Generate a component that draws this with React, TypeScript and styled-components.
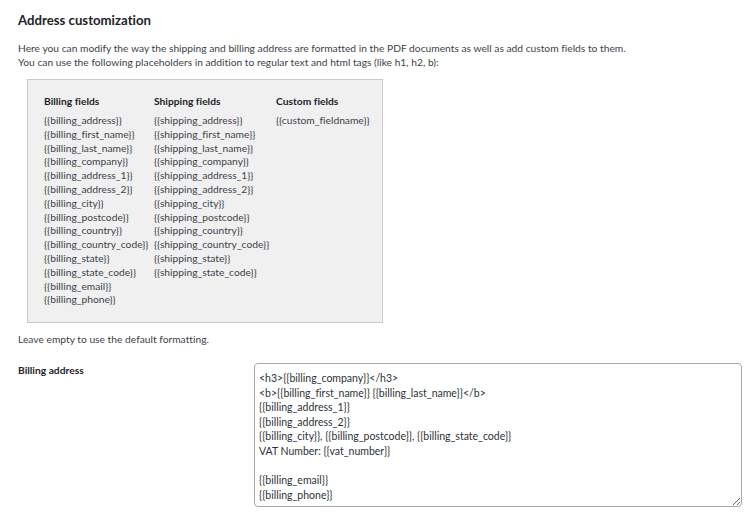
import styled, { createGlobalStyle } from "styled-components";

const GlobalStyle = createGlobalStyle`
    body {
        margin: 0;
        background: #fff;
        font-family: Lato, "Open Sans", sans-serif;
        font-variant-ligatures: none;
        color: #3c434a;
    }
`;

const Page = styled.div`
    padding: 10px 18px 0 18px;
    width: 750px;
    box-sizing: border-box;
`;

const Title = styled.h2`
    margin: 0;
    font-size: 13.2px;
    font-weight: 700;
    color: #1d2327;
    line-height: 20px;
`;

const Description = styled.p`
    margin: 11px 0 0 0;
    font-size: 10.25px;
    line-height: 14px;
`;

const PlaceholderBox = styled.div`
    margin: 10px 0 0 9px;
    width: 356px;
    height: 244px;
    box-sizing: border-box;
    background: #f0f0f0;
    border: 1px solid #c9c9c9;
    padding: 14px 16px;
    display: grid;
    grid-template-columns: 110px 122px 1fr;
    align-content: start;
`;

const Column = styled.div`
    display: flex;
    flex-direction: column;
`;

const ColumnTitle = styled.div`
    font-size: 10.25px;
    font-weight: 700;
    color: #1d2327;
    line-height: 14px;
    margin-bottom: 6px;
`;

const Placeholder = styled.div`
    font-size: 10.25px;
    line-height: 13.8px;
    white-space: nowrap;
`;

const Note = styled.p`
    margin: 9px 0 0 0;
    font-size: 10.25px;
    line-height: 14px;
`;

const FormRow = styled.div`
    margin-top: 17px;
    display: grid;
    grid-template-columns: 236px 1fr;
    align-items: start;
`;

const Label = styled.label`
    font-size: 10.25px;
    font-weight: 700;
    color: #1d2327;
    line-height: 14px;
`;

const AddressInput = styled.textarea`
    width: 488px;
    height: 144px;
    box-sizing: border-box;
    border: 1px solid #a7aaad;
    border-radius: 4px;
    padding: 7px 4px;
    font-family: Lato, "Open Sans", sans-serif;
    font-variant-ligatures: none;
    font-size: 10.5px;
    line-height: 14.6px;
    color: #2c3338;
    background: #fff;
    outline: none;
    overflow: hidden;
`;

const billingFields = [
    "address", "first_name", "last_name", "company", "address_1", "address_2",
    "city", "postcode", "country", "country_code", "state", "state_code", "email", "phone",
];

const shippingFields = [
    "address", "first_name", "last_name", "company", "address_1", "address_2",
    "city", "postcode", "country", "country_code", "state", "state_code",
];

const billingTemplate = `<h3>{{billing_company}}</h3>
<b>{{billing_first_name}} {{billing_last_name}}</b>
{{billing_address_1}}
{{billing_address_2}}
{{billing_city}}, {{billing_postcode}}, {{billing_state_code}}
VAT Number: {{vat_number}}

{{billing_email}}
{{billing_phone}}`;

const App = () => {
    return (
        <Page>
            <GlobalStyle />
            <Title>Address customization</Title>
            <Description>
                Here you can modify the way the shipping and billing address are formatted in the PDF documents as well as add custom fields to them.
                <br />
                You can use the following placeholders in addition to regular text and html tags (like h1, h2, b):
            </Description>
            <PlaceholderBox>
                <Column>
                    <ColumnTitle>Billing fields</ColumnTitle>
                    {billingFields.map((f) => (
                        <Placeholder key={f}>{`{{billing_${f}}}`}</Placeholder>
                    ))}
                </Column>
                <Column>
                    <ColumnTitle>Shipping fields</ColumnTitle>
                    {shippingFields.map((f) => (
                        <Placeholder key={f}>{`{{shipping_${f}}}`}</Placeholder>
                    ))}
                </Column>
                <Column>
                    <ColumnTitle>Custom fields</ColumnTitle>
                    <Placeholder>{"{{custom_fieldname}}"}</Placeholder>
                </Column>
            </PlaceholderBox>
            <Note>Leave empty to use the default formatting.</Note>
            <FormRow>
                <Label>Billing address</Label>
                <AddressInput defaultValue={billingTemplate} spellCheck={false} />
            </FormRow>
        </Page>
    );
};

export default App;
